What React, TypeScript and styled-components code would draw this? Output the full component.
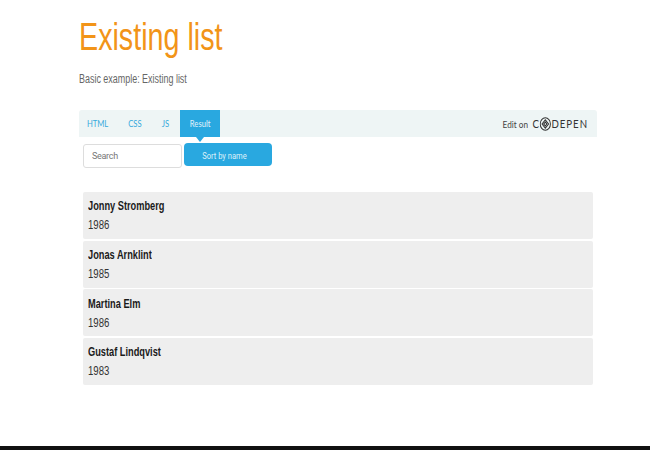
import React from "react";
import styled, { createGlobalStyle } from "styled-components";

const Global = createGlobalStyle`
  html, body { margin: 0; padding: 0; background: #fff; }
  body { font-family: "Liberation Sans", Arial, sans-serif; }
`;

const Page = styled.div`
  height: 450px;
  box-sizing: border-box;
  overflow: hidden;
  display: flex;
  flex-direction: column;
  padding: 0 53px 0 79px;
  border-bottom: 4px solid #111;
`;

const Narrow = styled.span<{ $origin?: string; $x?: number }>`
  display: inline-block;
  white-space: nowrap;
  transform: scaleX(${(p) => p.$x ?? 0.8});
  transform-origin: ${(p) => p.$origin ?? "left"} center;
`;

const Title = styled.h1`
  margin: 15px 0 0;
  font-size: 38px;
  line-height: 44px;
  font-weight: 400;
  color: #f29418;
`;

const Lead = styled.p`
  margin: 13px 0 0;
  font-size: 12px;
  line-height: 14px;
  color: #666;
`;

const TabBar = styled.div`
  margin-top: 24px;
  height: 27px;
  display: flex;
  align-items: stretch;
  justify-content: space-between;
  background: #eef5f5;
  border-radius: 3px 3px 0 0;
`;

const Tabs = styled.div`
  display: flex;
`;

const Tab = styled.span<{ $active?: boolean; $width: number }>`
  position: relative;
  width: ${(p) => p.$width}px;
  display: flex;
  align-items: center;
  justify-content: center;
  font-family: "Lato", sans-serif;
  font-size: 9px;
  color: ${(p) => (p.$active ? "#e3f3fb" : "#36a9dc")};
  background: ${(p) => (p.$active ? "#29a8e0" : "transparent")};

  &:last-child { margin-left: 3px; }

  ${(p) =>
    p.$active &&
    `&::after {
      content: "";
      position: absolute;
      left: 50%;
      bottom: -5px;
      margin-left: -4px;
      border-left: 4px solid transparent;
      border-right: 4px solid transparent;
      border-top: 5px solid #29a8e0;
    }`}
`;

const Edit = styled.div`
  display: flex;
  align-items: center;
  padding-right: 9px;
  gap: 0;
  font-family: "Lato", sans-serif;
  font-size: 10px;
  color: #444;
`;

const Wordmark = styled.span`
  display: flex;
  align-items: center;
  margin-left: -3px;
  font-family: "Lato", sans-serif;
  font-size: 11px;
  letter-spacing: 1.1px;
  color: #333;
  transform: scaleX(0.88);
  transform-origin: right center;
`;

const Controls = styled.div`
  margin: 6px 0 0 4px;
  display: flex;
  align-items: flex-start;
  gap: 2px;
`;

const Search = styled.input`
  width: 99px;
  height: 24px;
  margin-top: 1px;
  box-sizing: border-box;
  padding: 0 8px;
  border: 1px solid #ddd;
  border-radius: 3px;
  background: #fff;
  font-family: "Roboto", sans-serif;
  font-size: 9px;
  letter-spacing: -0.3px;
  color: #555;
  &::placeholder { color: #777; opacity: 1; }
`;

const SortButton = styled.button`
  width: 88px;
  height: 23px;
  padding: 2px 7px 0 0;
  border: 0;
  border-radius: 4px;
  background: #29a8e0;
  font-family: "Roboto", sans-serif;
  font-size: 9px;
  color: #dff1fa;
`;

const List = styled.ul`
  list-style: none;
  margin: 24px 4px 0;
  padding: 0;
  display: flex;
  flex-direction: column;
  gap: 1.67px;
`;

const Row = styled.li`
  height: 47px;
  box-sizing: border-box;
  padding: 7.4px 5px 0;
  background: #eee;
  border-radius: 2px;
`;

const Name = styled.div`
  font-size: 12px;
  line-height: 14px;
  font-weight: 700;
  color: #1a1a1a;
`;

const Year = styled.div`
  margin-top: 5px;
  font-size: 12px;
  line-height: 14px;
  color: #333;
`;

const people = [
  { name: "Jonny Stromberg", year: 1986 },
  { name: "Jonas Arnklint", year: 1985 },
  { name: "Martina Elm", year: 1986 },
  { name: "Gustaf Lindqvist", year: 1983 },
];

const PenMark = () => (
  <svg width="13" height="14" viewBox="0 0 13 14" fill="none" stroke="#333" strokeWidth="1.1">
    <ellipse cx="6.5" cy="7" rx="5.8" ry="6.2" />
    <path d="M6.5 2.8 10.2 7 6.5 11.2 2.8 7Z" />
    <path d="M6.5 5 8.4 7 6.5 9 4.6 7Z" />
  </svg>
);

export default function App() {
  return (
    <Page>
      <Global />
      <Title><Narrow $x={0.755}>Existing list</Narrow></Title>
      <Lead><Narrow $x={0.745}>Basic example: Existing list</Narrow></Lead>
      <TabBar>
        <Tabs>
          <Tab $width={37}><Narrow $origin="center" $x={0.85}>HTML</Narrow></Tab>
          <Tab $width={37}><Narrow $origin="center" $x={0.85}>CSS</Narrow></Tab>
          <Tab $width={24}><Narrow $origin="center" $x={0.85}>JS</Narrow></Tab>
          <Tab $width={40} $active><Narrow $origin="center" $x={0.85}>Result</Narrow></Tab>
        </Tabs>
        <Edit>
          <Narrow $origin="right" $x={0.82}>Edit on</Narrow>
          <Wordmark>C<PenMark />DEPEN</Wordmark>
        </Edit>
      </TabBar>
      <Controls>
        <Search placeholder="Search" />
        <SortButton><Narrow $origin="center" $x={0.84}>Sort by name</Narrow></SortButton>
      </Controls>
      <List>
        {people.map((p) => (
          <Row key={p.name}>
            <Name><Narrow $x={0.77}>{p.name}</Narrow></Name>
            <Year><Narrow>{p.year}</Narrow></Year>
          </Row>
        ))}
      </List>
    </Page>
  );
}
